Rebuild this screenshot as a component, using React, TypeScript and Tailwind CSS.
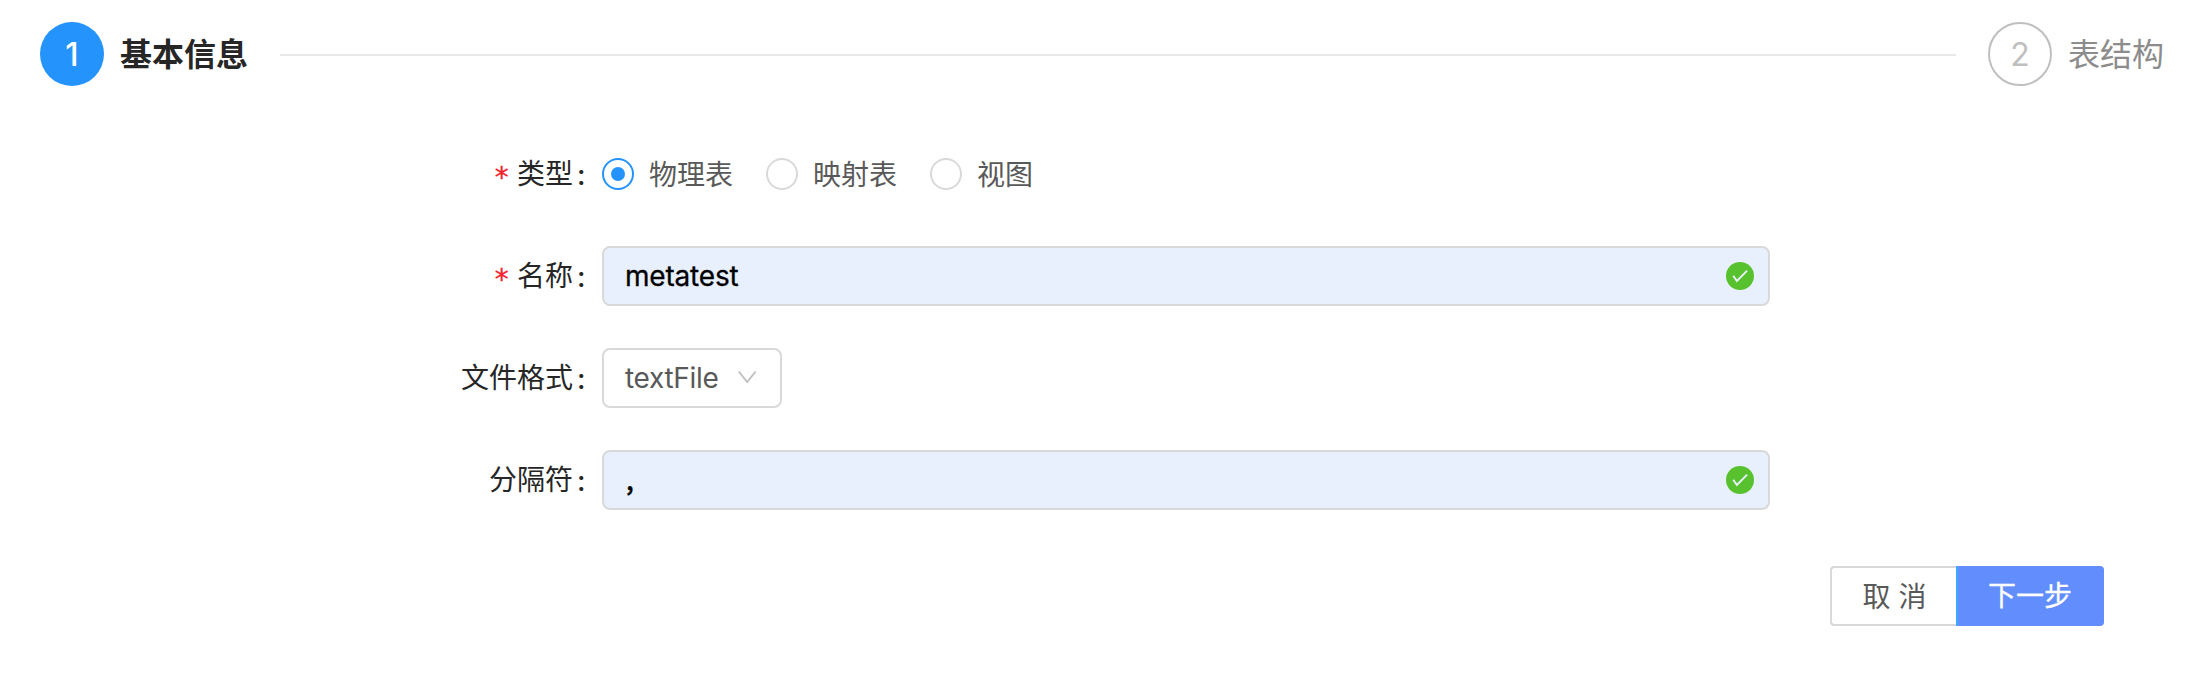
import type { ReactNode } from "react";

interface FormRowProps {
  label: string;
  required?: boolean;
  children: ReactNode;
}

const FormRow = ({ label, required, children }: FormRowProps) => {
  return (
    <div className="flex h-[60px] items-center">
      <div className="flex w-[602px] shrink-0 items-center justify-end text-[#262626]">
        {required && (
          <span className="mr-[7px] pt-2 font-['DejaVu_Sans_Mono'] text-[28px] text-[#f5222d] [-webkit-text-stroke:0.3px_#f5222d]">
            *
          </span>
        )}
        <span>{label}</span>
        <span className="mr-[17px] ml-1 w-[8px] pt-px text-center font-medium">:</span>
      </div>
      {children}
    </div>
  );
};

interface RadioProps {
  label: string;
  checked?: boolean;
}

const Radio = ({ label, checked }: RadioProps) => {
  return (
    <label className="mr-[33px] flex items-center gap-[15px]">
      <span
        className={`flex h-8 w-8 items-center justify-center rounded-full border-2 ${
          checked ? "border-[#2593fc]" : "border-[#d9d9d9]"
        }`}
      >
        {checked && <span className="h-[14px] w-[14px] rounded-full bg-[#2593fc]" />}
      </span>
      <span className="pt-px">{label}</span>
    </label>
  );
};

const TextField = ({ children }: { children: ReactNode }) => {
  return (
    <div className="flex h-[60px] w-[1168px] items-center justify-between rounded-lg border-2 border-[#d9d9d9] bg-[#e8f0fe] pr-[14px] pl-[21px] text-black">
      {children}
      <svg className="mb-px h-7 w-7" viewBox="0 0 28 28" fill="none">
        <circle cx="14" cy="14" r="14" fill="#57c22d" />
        <path d="M7.2 13.700l3.700 5.300 10.200-10.300" stroke="#e8f0fe" strokeWidth="1.9" />
      </svg>
    </div>
  );
};

export default function App() {
  return (
    <div className="h-[688px] w-[2200px] overflow-hidden bg-white pt-[22px] font-[Inter,'Noto_Sans_CJK_SC',sans-serif] text-[28px] leading-[42px] text-[#595959]">
      <div className="flex h-16 items-center pr-9 pl-10 text-[32px]">
        <span className="flex h-16 w-16 items-center justify-center rounded-full bg-[#2593fc] pt-px font-medium text-white">
          1
        </span>
        <span className="ml-4 pt-0.5 font-bold text-[#262626]">基本信息</span>
        <span className="mx-8 mt-0.5 h-[2px] flex-1 bg-[#e8e8e8]" />
        <span className="flex h-16 w-16 items-center justify-center rounded-full border-2 border-[#bfbfbf] pt-px text-[#bfbfbf]">
          2
        </span>
        <span className="ml-4 pt-0.5 text-[#8c8c8c]">表结构</span>
      </div>

      <div className="mt-[58px] flex flex-col gap-[42px]">
        <FormRow label="类型" required>
          <Radio label="物理表" checked />
          <Radio label="映射表" />
          <Radio label="视图" />
        </FormRow>
        <FormRow label="名称" required>
          <TextField>
            <span className="tracking-[-0.2px] [-webkit-text-stroke:0.3px_black]">metatest</span>
          </TextField>
        </FormRow>
        <FormRow label="文件格式">
          <div className="flex h-[60px] w-[180px] items-center justify-between rounded-lg border-2 border-[#d9d9d9] pr-[22px] pl-[21px]">
            <span className="tracking-[-0.3px]">textFile</span>
            <svg className="h-5 w-5" viewBox="0 0 20 20" fill="none">
              <path d="M0.8 3.500l8.400 10.500 8.400-10.500" stroke="#bfbfbf" strokeWidth="1.9" />
            </svg>
          </div>
        </FormRow>
        <FormRow label="分隔符">
          <TextField>
            <span className="pb-1 pl-px font-['Noto_Sans_CJK_SC'] [-webkit-text-stroke:0.6px_black]">,</span>
          </TextField>
        </FormRow>
      </div>

      <div className="mt-14 flex justify-end pr-24">
        <button className="flex h-[60px] w-[126px] items-center justify-center gap-2 rounded-l border-2 border-r-0 border-[#d9d9d9] pt-px pl-px">
          <span>取</span>
          <span>消</span>
        </button>
        <button className="h-[60px] w-[148px] rounded-r border-l-2 border-[#40a9ff] bg-[#618dfd] pr-0.5 text-white [-webkit-text-stroke:0.3px_white]">
          下一步
        </button>
      </div>
    </div>
  );
}
